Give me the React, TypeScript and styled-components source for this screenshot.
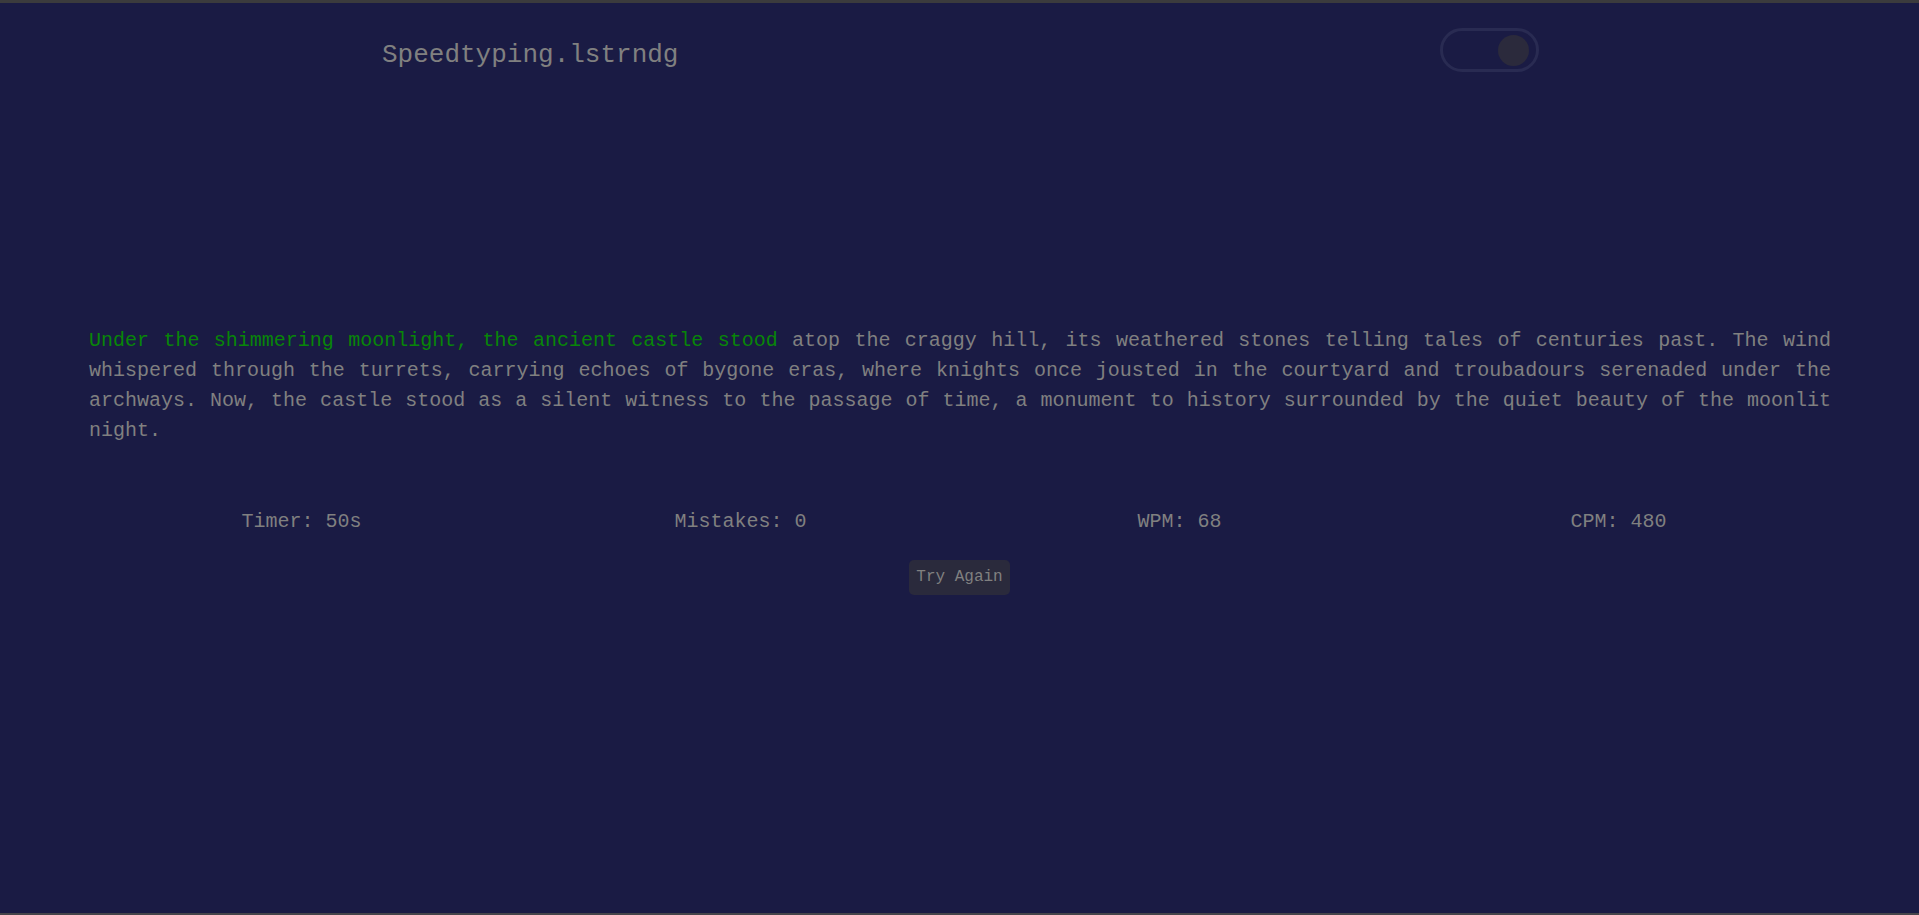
import React from "react";
import styled, { createGlobalStyle } from "styled-components";

const GlobalStyle = createGlobalStyle`
  html, body {
    margin: 0;
    padding: 0;
    background: #1a1b44;
  }
  * { box-sizing: border-box; }
`;

const Page = styled.div`
  min-height: 100vh;
  background: #1a1b44;
  border-top: 3px solid #3b3b3d;
  border-bottom: 2px solid #45454a;
  font-family: "Liberation Mono", "DejaVu Sans Mono", monospace;
  color: #808080;
  display: flex;
  flex-direction: column;
`;

const Header = styled.header`
  height: 94px;
  padding: 0 380px 0 382px;
  display: flex;
  align-items: center;
  justify-content: space-between;
`;

const Title = styled.h1`
  margin: 0;
  font-size: 26px;
  font-weight: 400;
  line-height: 30px;
  color: #808080;
  padding-top: 9px;
`;

const Toggle = styled.div<{ $on: boolean }>`
  width: 99px;
  height: 44px;
  border: 3px solid #292b52;
  border-radius: 22px;
  padding: 0 7px;
  display: flex;
  align-items: center;
  justify-content: ${(p) => (p.$on ? "flex-end" : "flex-start")};
`;

const Knob = styled.span`
  width: 31px;
  height: 31px;
  border-radius: 50%;
  background: #2b2a3c;
`;

const Passage = styled.p`
  margin: 229px 0 0;
  padding: 0 88px 0 89px;
  font-size: 20px;
  line-height: 30px;
  text-align: justify;
  color: #808080;
`;

const Typed = styled.span`
  color: #088608;
`;

const Stats = styled.div`
  margin: 61px 0 0;
  padding: 0 81px 0 82px;
  display: grid;
  grid-template-columns: repeat(4, 1fr);
`;

const Stat = styled.div`
  text-align: center;
  font-size: 20px;
  line-height: 30px;
  color: #808080;
`;

const ButtonRow = styled.div`
  margin-top: 23px;
  display: flex;
  justify-content: center;
`;

const RetryButton = styled.button`
  font-family: "Liberation Mono", "DejaVu Sans Mono", monospace;
  font-size: 16px;
  line-height: 19px;
  padding: 8px 7px;
  color: #808080;
  background: #2a2a3c;
  border: none;
  border-radius: 5px;
  cursor: pointer;
`;

const typed = "Under the shimmering moonlight, the ancient castle stood";
const rest =
  " atop the craggy hill, its weathered stones telling tales of centuries past. The wind whispered through the turrets, carrying echoes of bygone eras, where knights once jousted in the courtyard and troubadours serenaded under the archways. Now, the castle stood as a silent witness to the passage of time, a monument to history surrounded by the quiet beauty of the moonlit night.";

const stats = [
  { label: "Timer", value: "50s" },
  { label: "Mistakes", value: "0" },
  { label: "WPM", value: "68" },
  { label: "CPM", value: "480" },
];

export default function App() {
  return (
    <>
      <GlobalStyle />
      <Page>
        <Header>
          <Title>Speedtyping.lstrndg</Title>
          <Toggle $on={true}>
            <Knob />
          </Toggle>
        </Header>
        <Passage>
          <Typed>{typed}</Typed>
          {rest}
        </Passage>
        <Stats>
          {stats.map((s) => (
            <Stat key={s.label}>
              {s.label}: {s.value}
            </Stat>
          ))}
        </Stats>
        <ButtonRow>
          <RetryButton>Try Again</RetryButton>
        </ButtonRow>
      </Page>
    </>
  );
}
